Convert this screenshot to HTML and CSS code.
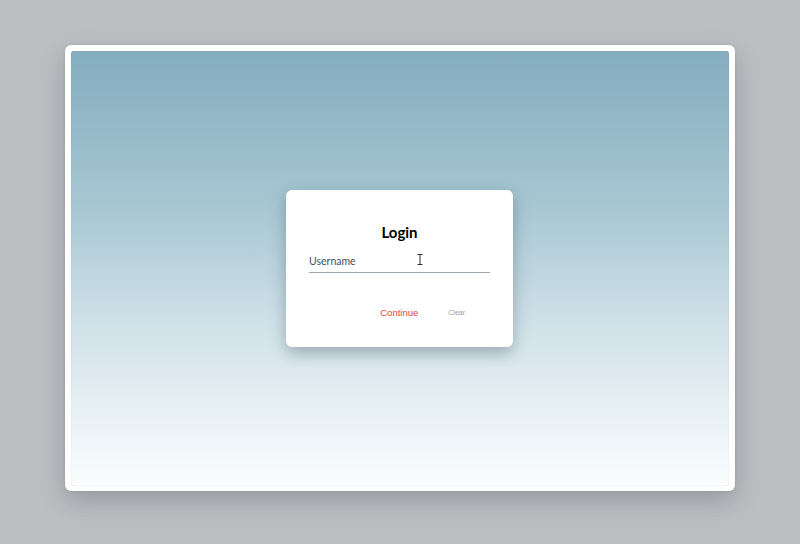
FILE: index.html
```html
<!DOCTYPE html>
<html lang="en">
<head>
<meta charset="utf-8">
<title>Login</title>
<link rel="stylesheet" href="styles.css">
</head>
<body>
<div class="frame">
  <div class="screen">
    <div class="card">
      <h1 class="title">Login</h1>
      <div class="field">
        <span class="label">Username</span>
        <svg class="ibeam" width="6" height="11" viewBox="0 0 6 11"><path d="M0.5 0.5h5M0.5 10.5h5M3 0.5v10" stroke="#333" stroke-width="1" fill="none"/></svg>
      </div>
      <div class="actions">
        <span class="btn continue">Continue</span>
        <span class="btn clear">Clear</span>
      </div>
    </div>
  </div>
</div>
</body>
</html>
```
FILE: styles.css
```css
html, body {
  margin: 0;
  padding: 0;
}
body {
  background: #bdbec2;
  width: 800px;
  height: 544px;
  box-sizing: border-box;
  padding: 45px 65px 53px;
  font-family: "Lato", "Liberation Sans", sans-serif;
}
.frame {
  height: 100%;
  box-sizing: border-box;
  background: #ffffff;
  border-radius: 6px;
  padding: 6px 6px 5px;
  box-shadow: 0 10px 24px rgba(60, 62, 70, 0.28), 0 0 2px rgba(0,0,0,0.15);
}
.screen {
  height: 100%;
  border-radius: 3px;
  background: linear-gradient(to bottom, #84adbf 0%, #a6c6d2 35%, #d3e3ea 65%, #fbfdfe 100%);
  box-shadow: inset 0 0 1px rgba(0,0,0,0.25);
  display: flex;
  align-items: center;
  justify-content: center;
}
.card {
  width: 227px;
  height: 157px;
  margin-right: 1px;
  box-sizing: border-box;
  background: #ffffff;
  border-radius: 6px;
  box-shadow: 0 6px 16px rgba(40, 60, 75, 0.35);
  padding: 33px 23px 0;
  display: flex;
  flex-direction: column;
}
.title {
  margin: 0;
  font-family: "Lato", sans-serif;
  font-weight: 700;
  font-size: 15px;
  line-height: 18px;
  text-align: center;
  color: #000;
}
.field {
  position: relative;
  margin-top: 14px;
  padding-bottom: 5px;
  border-bottom: 1.5px solid #9aa8b3;
  display: flex;
}
.label {
  font-family: "Lato", sans-serif;
  font-size: 10.5px;
  line-height: 12px;
  color: #37536a;
}
.ibeam {
  position: absolute;
  left: 108px;
  top: -1px;
}
.actions {
  margin-top: 34px;
  display: flex;
  justify-content: flex-end;
  align-items: center;
  gap: 30px;
  padding-right: 25px;
}
.btn {
  font-family: "Liberation Sans", Arial, sans-serif;
  line-height: 12px;
}
.continue {
  font-size: 9.5px;
  color: #e0473b;
}
.clear {
  font-size: 7px;
  color: #9a9a9a;
}
```
